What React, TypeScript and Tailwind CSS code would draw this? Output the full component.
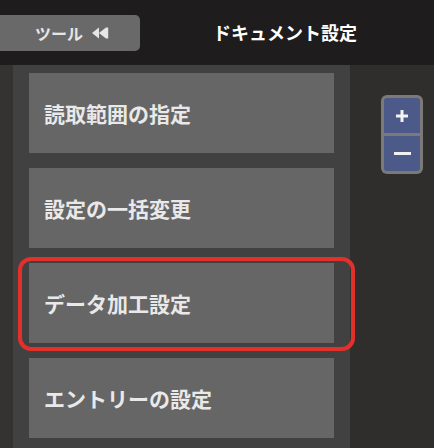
const FONT = { fontFamily: '"Noto Sans CJK JP", "Noto Sans", sans-serif' };

const ITEMS = ["読取範囲の指定", "設定の一括変更", "データ加工設定", "エントリーの設定"];
const HIGHLIGHT = 2;

function Rewind() {
  return (
    <svg width="18" height="14" viewBox="0 0 18 14" className="ml-2">
      <path d="M1 7 L8 1.5 V12.5 Z" fill="#e6e6e6" />
      <path d="M8 7 L15 1.5 V12.5 Z" fill="#e6e6e6" />
      <rect x="15" y="1.5" width="2.2" height="11" fill="#e6e6e6" />
    </svg>
  );
}

function ZoomControl() {
  return (
    <div className="flex w-[42px] flex-col gap-[3px] rounded-[6px] bg-[#7b7a79] p-[3px]">
      <button className="flex h-[35px] items-center justify-center rounded-t-[3px] bg-[#4b5a88]">
        <svg width="16" height="16" viewBox="0 0 16 16">
          <path d="M8 2 V14 M2 8 H14" stroke="#f2f2f2" strokeWidth="3" />
        </svg>
      </button>
      <button className="flex h-[35px] items-center justify-center rounded-b-[3px] bg-[#4b5a88]">
        <span className="block h-[3px] w-[17px] bg-[#f0f0f0]" />
      </button>
    </div>
  );
}

export default function App() {
  return (
    <div className="flex h-[448px] w-[434px] flex-col overflow-hidden bg-[#302e2c]" style={FONT}>
      {/* header */}
      <div className="flex h-[65px] shrink-0 items-center bg-[#1e1c1c]">
        <button className="flex h-[36px] w-[140px] items-center justify-center rounded-r-[5px] bg-[#6a6969] pl-1 text-[16px] font-bold text-[#e6e6e6]">
          ツール
          <Rewind />
        </button>
        <h1 className="ml-[73px] text-[18px] font-bold text-white">ドキュメント設定</h1>
      </div>

      {/* body */}
      <div className="flex flex-1">
        <div className="w-[13px] bg-[#353332]" />
        <div className="flex w-[337px] flex-col gap-[15px] bg-[#424141] px-[16px] pt-[8px]">
          {ITEMS.map((label, i) => (
            <div key={label} className="relative">
              <div className="flex h-[80px] items-center bg-[#676666] pl-[15px] pt-[2px] text-[21px] font-bold text-[#e9e9e9]">
                {label}
              </div>
              {i === HIGHLIGHT && (
                <div className="pointer-events-none absolute -top-[6px] -right-[21px] -bottom-[8px] -left-[11px] rounded-[13px] border-[4px] border-[#e3302a]" />
              )}
            </div>
          ))}
        </div>
        <div className="flex flex-1 justify-end pr-[11px] pt-[30px]">
          <div>
            <ZoomControl />
          </div>
        </div>
      </div>
    </div>
  );
}
